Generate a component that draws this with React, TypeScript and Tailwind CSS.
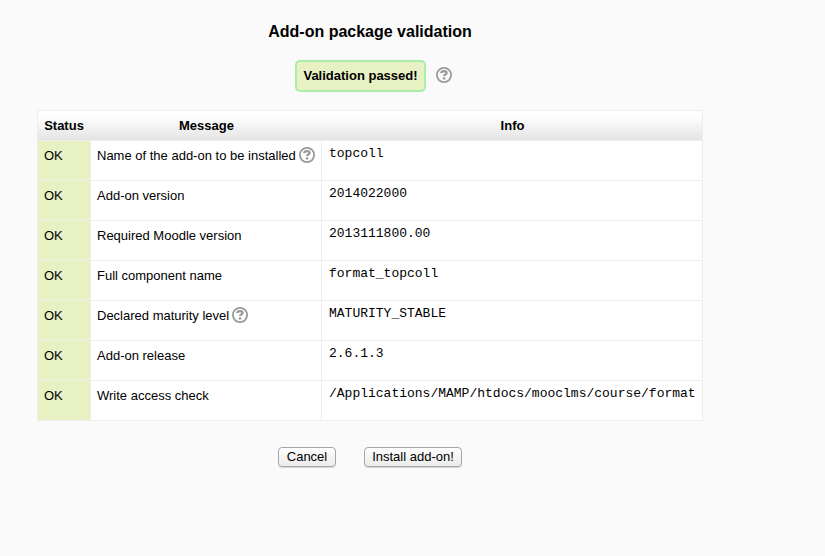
type Row = { message: string; info: string; help?: boolean };

const rows: Row[] = [
  { message: "Name of the add-on to be installed", info: "topcoll", help: true },
  { message: "Add-on version", info: "2014022000" },
  { message: "Required Moodle version", info: "2013111800.00" },
  { message: "Full component name", info: "format_topcoll" },
  { message: "Declared maturity level", info: "MATURITY_STABLE", help: true },
  { message: "Add-on release", info: "2.6.1.3" },
  { message: "Write access check", info: "/Applications/MAMP/htdocs/mooclms/course/format" },
];

function HelpIcon() {
  return (
    <svg className="block h-4 w-4 shrink-0" viewBox="0 0 16 16" fill="none" aria-label="Help">
      <circle cx="8" cy="8" r="7.1" stroke="#999999" strokeWidth="1.8" />
      <path d="M5.2 6.1C5.3 4.8 6.4 4.2 8 4.2s2.6.7 2.6 1.8c0 1.5-2.5 1.4-2.5 3.1" stroke="#999999" strokeWidth="2.3" />
      <rect x="6.8" y="10.3" width="2.5" height="2.2" rx="0.5" fill="#999999" />
    </svg>
  );
}

const buttonClass =
  "h-5 rounded-[4px] border border-[#a6a6a6] bg-linear-to-b from-white via-[#f4f4f4] to-[#ececec] pb-px text-[13px] leading-[17px] whitespace-nowrap shadow-[0_1px_0_#d8d8d8]";

export default function App() {
  return (
    <main className="h-[556px] w-full overflow-hidden bg-[#fafafa] font-['Liberation_Sans',Arial,sans-serif] text-[13px] text-black">
      <div className="ml-[37px] flex w-[666px] flex-col">
        <h1 className="mt-[22px] text-center text-[16px] leading-5 font-bold">Add-on package validation</h1>
        <div className="mt-[18px] ml-[258px] flex h-8 items-center">
          <div className="flex h-8 w-[131px] items-center justify-center rounded-[5px] border-2 border-[#aaeeaa] bg-[#e7f1c3] pb-px font-bold whitespace-nowrap">
            Validation passed!
          </div>
          <div className="ml-[10px] pb-[2px]">
            <HelpIcon />
          </div>
        </div>
        <table className="mt-[18px] w-[666px] table-fixed border-separate border-spacing-0 border-r border-b border-[#eeeeee] bg-white">
          <colgroup>
            <col className="w-[53px]" />
            <col className="w-[231px]" />
            <col className="w-[381px]" />
          </colgroup>
          <thead>
            <tr className="h-[30px] bg-linear-to-b from-white from-20% to-[#e4e4e4]">
              {["Status", "Message", "Info"].map((title) => (
                <th key={title} className="border-t border-[#eeeeee] p-0 pl-[2px] text-center font-bold first:border-l first:pl-0">
                  {title}
                </th>
              ))}
            </tr>
          </thead>
          <tbody>
            {rows.map((row) => (
              <tr key={row.message} className="h-10 align-top">
                <td className="border-t border-l border-[#eeeeee] bg-[#e7f1c3] pt-[7px] pl-[6px] leading-4">OK</td>
                <td className="border-t border-l border-[#eeeeee] pt-[7px] pl-[6px] leading-4">
                  <div className="flex h-4 items-center whitespace-nowrap">
                    {row.message}
                    {row.help && (
                      <span className="ml-[3px] -translate-y-px">
                        <HelpIcon />
                      </span>
                    )}
                  </div>
                </td>
                <td className="border-t border-l border-[#eeeeee] pt-[5px] pl-[7px] font-['Liberation_Mono','Courier_New',monospace] text-[13px] leading-4 whitespace-nowrap">
                  {row.info}
                </td>
              </tr>
            ))}
          </tbody>
        </table>
        <div className="mt-[26px] ml-[241px] flex gap-7">
          <button className={`${buttonClass} w-[58px]`}>Cancel</button>
          <button className={`${buttonClass} w-[98px]`}>Install add-on!</button>
        </div>
      </div>
    </main>
  );
}
